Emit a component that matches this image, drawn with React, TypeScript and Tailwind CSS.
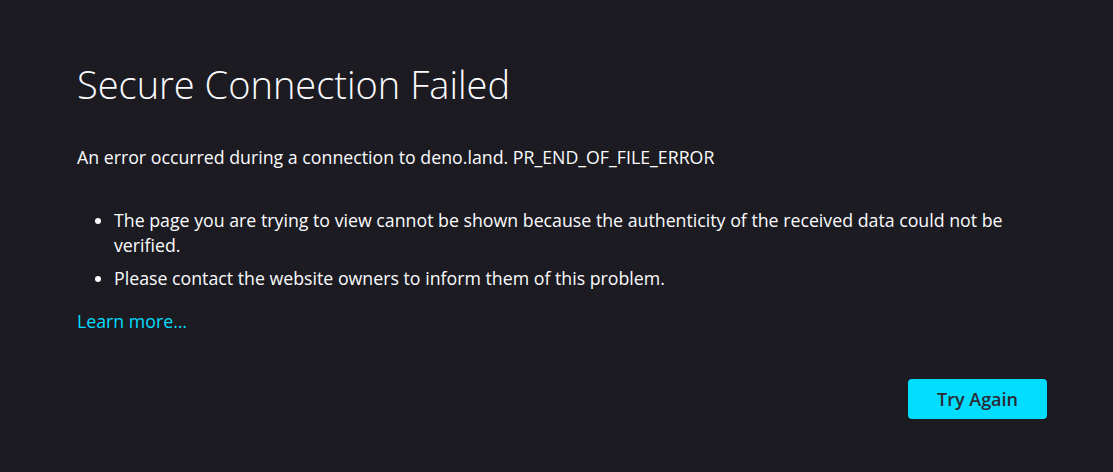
export default function App() {
  return (
    <div
      className="min-h-screen w-full bg-[#1c1b22] text-[#fbfbfe]"
      style={{ fontFamily: '"Open Sans", "Noto Sans", sans-serif' }}
    >
      <div className="ml-[77px] w-[970px] pt-[59px]">
        <h1 className="text-[38px] leading-[50px] font-light">Secure Connection Failed</h1>
        <p className="mt-[36px] text-[17.75px] leading-[25px]">
          An error occurred during a connection to deno.land. PR_END_OF_FILE_ERROR
        </p>
        <ul className="mt-[38px] list-disc pl-[37px] text-[17.75px] leading-[25px]">
          <li>
            The page you are trying to view cannot be shown because the authenticity of the received data could not be verified.
          </li>
          <li className="mt-[8px]">Please contact the website owners to inform them of this problem.</li>
        </ul>
        <a href="#" className="mt-[18px] block w-fit text-[17.75px] leading-[25px] text-[#00ddff]">
          Learn more…
        </a>
        <div className="mt-[45px] flex justify-end">
          <button className="h-[40px] w-[139px] rounded-[4px] bg-[#00ddff] text-[18px] font-semibold text-[#2b2a33]">
            Try Again
          </button>
        </div>
      </div>
    </div>
  );
}
